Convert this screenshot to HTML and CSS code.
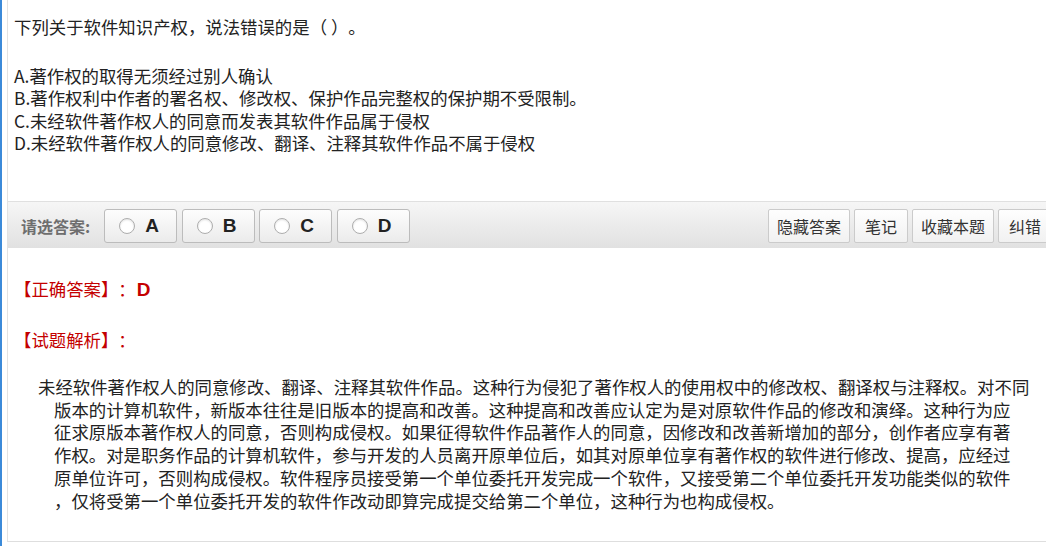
FILE: index.html
```html
<!DOCTYPE html>
<html lang="zh-CN">
<head>
  <meta charset="UTF-8">
  <meta name="viewport" content="width=device-width, initial-scale=1.0">
  <title>软件知识产权 - 试题</title>
  <link rel="stylesheet" href="styles.css">
</head>
<body>
  <div class="page">
    <div class="paper">
      <div class="question">
        <p class="stem">下列关于软件知识产权，说法错误的是（ ）。</p>
        <div class="options">
          <p>A.著作权的取得无须经过别人确认</p>
          <p>B.著作权利中作者的署名权、修改权、保护作品完整权的保护期不受限制。</p>
          <p>C.未经软件著作权人的同意而发表其软件作品属于侵权</p>
          <p>D.未经软件著作权人的同意修改、翻译、注释其软件作品不属于侵权</p>
        </div>
      </div>

      <div class="toolbar">
        <span class="pick-label">请选答案:</span>
        <div class="choices">
          <button class="choice"><span class="radio"></span>A</button>
          <button class="choice"><span class="radio"></span>B</button>
          <button class="choice"><span class="radio"></span>C</button>
          <button class="choice"><span class="radio"></span>D</button>
        </div>
        <div class="tools">
          <button class="tool">隐藏答案</button>
          <button class="tool">笔记</button>
          <button class="tool">收藏本题</button>
          <button class="tool">纠错</button>
        </div>
      </div>

      <div class="answer">
        <p class="answer-line"><span class="tag">【正确答案】：</span><strong class="answer-key">D</strong></p>
        <p class="tag analysis-title">【试题解析】：</p>
        <p class="analysis">未经软件著作权人的同意修改、翻译、注释其软件作品。这种行为侵犯了著作权人的使用权中的修改权、翻译权与注释权。对不同<br>版本的计算机软件，新版本往往是旧版本的提高和改善。这种提高和改善应认定为是对原软件作品的修改和演绎。这种行为应<br>征求原版本著作权人的同意，否则构成侵权。如果征得软件作品著作人的同意，因修改和改善新增加的部分，创作者应享有著<br>作权。对是职务作品的计算机软件，参与开发的人员离开原单位后，如其对原单位享有著作权的软件进行修改、提高，应经过<br>原单位许可，否则构成侵权。软件程序员接受第一个单位委托开发完成一个软件，又接受第二个单位委托开发功能类似的软件<br>，仅将受第一个单位委托开发的软件作改动即算完成提交给第二个单位，这种行为也构成侵权。</p>
      </div>
    </div>
  </div>
</body>
</html>
```

FILE: styles.css
```css
* {
  margin: 0;
  padding: 0;
  box-sizing: border-box;
}

body {
  font-family: "Noto Sans CJK SC", "Liberation Sans", sans-serif;
  background: #fff;
  color: #333;
  width: 1046px;
  height: 546px;
  overflow: hidden;
  text-spacing-trim: space-all;
}

.page {
  height: 546px;
  border-left: 2px solid #3b8ad9;
  padding-left: 5px;
}

.paper {
  height: 542px;
  border-left: 1px solid #e2e2e2;
  border-bottom: 1px solid #dedede;
}

/* 题干 */
.question {
  height: 201px;
  padding: 16px 6px 0;
  font-size: 17.4px;
  line-height: 22.5px;
  color: #222;
}

.options {
  margin-top: 26px;
}

/* 选择答案工具条 */
.toolbar {
  display: flex;
  align-items: flex-start;
  height: 47px;
  margin-right: -6px;
  padding: 7px 0 0 13px;
  border-top: 1px solid #e0e0e0;
  background: linear-gradient(#f6f6f6, #e1e1e1);
}

.pick-label {
  font-size: 16px;
  font-weight: bold;
  line-height: 34px;
  color: #6e6e6e;
  margin-right: 14px;
}

.choices {
  display: flex;
  gap: 4.5px;
}

.choice {
  display: flex;
  align-items: center;
  width: 73px;
  height: 34px;
  padding-left: 14px;
  border: 1px solid #bcbcbc;
  border-radius: 3px;
  background: linear-gradient(#fdfdfd, #ebebeb);
  font-family: "Liberation Sans", sans-serif;
  font-size: 19px;
  font-weight: bold;
  color: #222;
}

.radio {
  width: 16px;
  height: 16px;
  margin-right: 10px;
  border: 1px solid #adadad;
  border-radius: 50%;
  background: #fff;
  box-shadow: inset 0 1px 2px rgba(0, 0, 0, 0.12);
}

.tools {
  display: flex;
  gap: 4px;
  margin-left: auto;
}

.tool {
  min-width: 54px;
  height: 34px;
  padding: 0 8px;
  border: 1px solid #cbcbcb;
  border-radius: 2px;
  background: linear-gradient(#fefefe, #f1f1f1);
  font-family: "Noto Sans CJK SC", sans-serif;
  font-size: 16px;
  color: #333;
}

/* 答案与解析 */
.answer {
  padding: 30px 6px 0;
}

.answer-line {
  line-height: 22px;
}

.tag {
  font-size: 17.4px;
  line-height: 22px;
  color: #c40000;
}

.answer-key {
  margin-left: 1px;
  font-family: "Liberation Sans", sans-serif;
  font-size: 19px;
  color: #c40000;
}

.analysis-title {
  margin-top: 28px;
}

.analysis {
  margin-top: 25px;
  padding-left: 40px;
  text-indent: -16px;
  font-size: 17.4px;
  line-height: 22.7px;
  color: #222;
  white-space: nowrap;
}
```
